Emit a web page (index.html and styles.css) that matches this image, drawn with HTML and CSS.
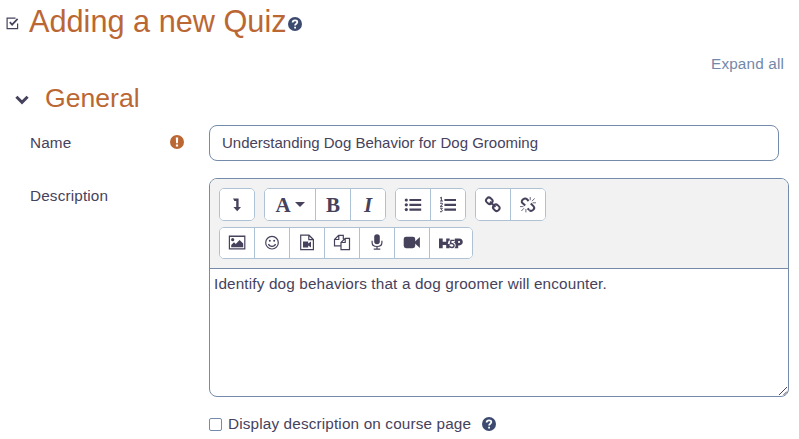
FILE: index.html
```html
<!DOCTYPE html>
<html lang="en">
<head>
<meta charset="utf-8">
<title>Adding a new Quiz</title>
<link rel="stylesheet" href="styles.css">
</head>
<body>
<svg class="defs" width="0" height="0">
  <symbol id="help" viewBox="0 0 14 14"><circle cx="7" cy="7" r="7"/><path d="M4.6 5.5C4.7 2.6 9.6 2.7 9.3 5.3 9.2 6.7 7.1 6.7 7.1 8.5M7.1 9.7V11.4" fill="none" stroke="#fff" stroke-width="1.8"/></symbol>
</svg>
<header class="page-title">
  <svg class="quiz-icon" viewBox="0 0 13 13"><path d="M9.5 1.1H1.1V11.6H11.6V6.5" fill="none" stroke="currentColor" stroke-width="1.2"/><path d="M3.8 5.2 6.1 7.7 11.6 1.8" fill="none" stroke="currentColor" stroke-width="1.7"/></svg>
  <h1>Adding a new Quiz</h1>
  <svg class="help"><use href="#help"/></svg>
</header>
<div class="expand"><a>Expand all</a></div>
<div class="section">
  <svg class="chevron" viewBox="0 0 14 10"><path d="M1.4 1.7 7 7.3 12.6 1.7" fill="none" stroke="currentColor" stroke-width="3"/></svg>
  <h2>General</h2>
</div>
<div class="row name-row">
  <div class="label"><label for="name">Name</label>
    <svg class="required" viewBox="0 0 14 14"><circle cx="7" cy="7" r="7"/><path d="M5.8 2.5H8.2L7.9 8.2H6.1ZM5.9 9.4H8.1V11.5H5.9Z" fill="#fff"/></svg>
  </div>
  <input id="name" type="text" value="Understanding Dog Behavior for Dog Grooming">
</div>
<div class="row desc-row">
  <div class="label"><label>Description</label></div>
  <div class="editor">
    <div class="toolbar">
      <div class="tools">
        <div class="group"><button><svg viewBox="0 0 18 18"><path d="M5 2.5H10.6V11H13L9.2 15.2 5.4 11H8.2V4.9H6.4Z"/></svg></button></div>
        <div class="group"><button class="styles"><b>A</b><span class="caret"></span></button><button><b>B</b></button><button><i>I</i></button></div>
        <div class="group">
          <button><svg viewBox="0 0 18 18"><circle cx="2.3" cy="4" r="1.6"/><circle cx="2.3" cy="8.8" r="1.6"/><circle cx="2.3" cy="13.6" r="1.6"/><path d="M5.4 2.9H17.2V5.1H5.4ZM5.4 7.7H17.2V9.9H5.4ZM5.4 12.5H17.2V14.7H5.4Z"/></svg></button>
          <button><svg viewBox="0 0 18 18"><path d="M5.4 2.9H17V5.1H5.4ZM5.4 7.7H17V9.9H5.4ZM5.4 12.5H17V14.7H5.4Z"/><path d="M1 2.2 2.4 1.2V5M1 5H4M1 7.2H3.3V8.6L1.2 10.4H3.7M1 12.2H3.4L2.2 13.7C4.2 13.7 3.7 16.4 1 15.7" fill="none" stroke="currentColor"/></svg></button>
        </div>
        <div class="group">
          <button><svg class="line" viewBox="0 0 18 18" stroke-width="2"><rect x="2" y="2" width="6.6" height="5.6" rx="2.6" transform="rotate(43 5.3 4.8)"/><rect x="9" y="8.9" width="6.6" height="5.6" rx="2.6" transform="rotate(43 12.3 11.7)"/><path d="M6 5.6 11.4 11"/></svg></button>
          <button><svg class="line" viewBox="0 0 18 18" stroke-width="2"><path d="M8 3.3C5.8 1.3 1.3 4.4 3.2 6.8L6.2 9.6M10.4 14.2C12.8 16.2 16.6 12.6 14.6 10.4L11.8 7.5M8 3.3 9.6 5M10.2 14 8.6 12.4"/><path d="M11.2 4.2V1M13 5.2 15.6 2.4M13.6 6.8H17M1 10.6H4.4M2.4 15 5 12.2M6.9 13V16.4" stroke-width=".8"/></svg></button>
        </div>
      </div>
      <div class="tools second">
        <div class="group">
          <button><svg viewBox="0 0 18 18"><path fill-rule="evenodd" d="M.8 1.5H17.4V15.5H.8ZM2 3.1V14.3H16.2V3.1Z"/><circle cx="4.7" cy="5.7" r="1.6"/><path d="M3.2 13.3V11L6 8.3 7.7 9.9 11.6 6 15.2 9.6V13.3Z"/></svg></button>
          <button><svg viewBox="0 0 18 18"><circle cx="9" cy="8.7" r="6.3" fill="none" stroke="currentColor" stroke-width="1.2"/><circle cx="6.8" cy="6.7" r="1"/><circle cx="11.2" cy="6.7" r="1"/><path d="M5.5 10C6.4 13.1 11.6 13.1 12.5 10" fill="none" stroke="currentColor" stroke-width="1.2"/></svg></button>
          <button><svg viewBox="0 0 18 18"><path d="M2.7 1.2H11L15.4 5.5V15.7H2.7ZM10.8 1.3V5.7H15.2" fill="none" stroke="currentColor" stroke-width="1.2"/><path d="M5 7.5H10.2V9.5L13 7.5V13.5L10.2 11.5V13.5H5Z"/></svg></button>
          <button><svg class="line" viewBox="0 0 18 18" stroke-width="1.2"><path d="M8 11.8H1.5V5.5L5.6 1.3H10.3V5.2M5.8 1.3V5.5H1.6M12.2 4.3H16.5V15.7H8V8.5ZM12.2 4.3V8.5H8"/></svg></button>
          <button><svg viewBox="0 0 18 18"><rect x="6.2" y=".3" width="5.6" height="10" rx="2.8"/><path d="M4.1 6.8V8.5C4.1 13.8 13.9 13.8 13.9 8.5V6.8M9 12.3V15M5.7 15.1H12.3" fill="none" stroke="currentColor" stroke-width="1.2"/></svg></button>
          <button><svg viewBox="0 0 18 18"><rect x=".7" y="2.7" width="11.5" height="11.5" rx="2.4"/><path d="M11.7 7.7 16.9 3V13.9L11.7 9.3Z"/></svg></button>
          <button class="h5p"><svg viewBox="0 0 26 16"><path d="M1 3.5H4.7V6.8H8.2V3.5H11.7V5.8H10.6L9.8 9H11.6V13.3H8.2V9.9H4.7V13.3H1ZM16.8 3.5H21.2C26 3.5 26 10.4 21.2 10.4H20.2V13.3H16.6C18.5 11.2 17.8 8 15.4 7.1H16.8ZM20.2 6.1V8H21.3C22.5 8 22.5 6.1 21.3 6.1Z" fill-rule="evenodd"/><path d="M16.6 5.4H13L12.4 8.7C16.6 7.5 17.4 12.6 13.8 12.5 12.3 12.5 11.7 11.7 11.4 11" fill="none" stroke="currentColor" stroke-width="1.4"/></svg></button>
        </div>
      </div>
    </div>
    <div class="content">Identify dog behaviors that a dog groomer will encounter.</div>
    <svg class="resize" viewBox="0 0 10 10"><path d="M1 9 9 1M5.5 9 9 5.5" fill="none" stroke="currentColor"/></svg>
  </div>
</div>
<div class="display-row"><input id="show" type="checkbox"><label for="show">Display description on course page</label><svg class="help"><use href="#help"/></svg></div>
</body>
</html>
```
FILE: styles.css
```css
* { box-sizing: border-box; }
body {
  margin: 0;
  height: 439px;
  overflow: hidden;
  background: #fff;
  color: #46425c;
  font: 15.3px/20px "Liberation Sans", Arial, sans-serif;
  letter-spacing: .15px;
}
svg { display: block; fill: currentColor; flex: none; }
.line { fill: none; stroke: currentColor; }
.defs { position: absolute; }
h1, h2 { margin: 0; color: #bb6733; font-weight: 400; letter-spacing: 0; }
.page-title { display: flex; align-items: center; height: 44px; padding-left: 6px; }
.quiz-icon { width: 13px; height: 13px; margin: 3px 10px 0 0; }
h1 { font-size: 30.7px; line-height: 44px; }
.help { width: 14px; height: 14px; color: #3c4a70; }
.page-title .help { margin: 3px 0 0 1px; }
.expand { display: flex; justify-content: flex-end; padding: 10px 15px 0 0; color: #7388a9; }
.section { display: flex; align-items: center; height: 32px; margin-top: 8px; padding-left: 15px; }
.chevron { width: 14px; height: 10px; margin: 3px 16px 0 0; }
h2 { font-size: 26.6px; line-height: 32px; }
.row { display: flex; padding-left: 30px; }
.name-row { margin-top: 11px; }
.desc-row { margin-top: 17px; }
.label { display: flex; justify-content: space-between; align-items: flex-start; width: 179px; padding: 8px 25px 0 0; flex: none; }
.required { width: 14px; height: 14px; margin-top: 2px; color: #bb6733; }
input[type="text"] {
  width: 570px; height: 36px; padding: 0 12px 1px; border: 1px solid #748baa; border-radius: 8px;
  background: #fff; color: inherit; font: inherit; font-size: 15px; letter-spacing: 0; outline: 0;
}
.editor { position: relative; width: 580px; height: 219px; border: 1px solid #748baa; border-radius: 8px; overflow: hidden; }
.toolbar { height: 90px; padding: 9px 9px 0; background: #f2f2f2; border-bottom: 1px solid #748baa; }
.tools { display: flex; gap: 9px; height: 33px; }
.second { height: 32px; margin-top: 6px; }
.group { display: flex; border: 1px solid #adc3d5; border-radius: 5px; background: #fff; overflow: hidden; }
button {
  display: flex; align-items: center; justify-content: center; width: 35px; padding: 0;
  border: 0; background: #fff; color: inherit; font: 21px/28px "Liberation Serif", serif; letter-spacing: 0;
}
button + button { border-left: 1px solid #adc3d5; }
.group button:first-child { width: 34px; }
button svg { width: 18px; height: 18px; }
.group .styles:first-child { width: 50px; gap: 4px; }
.caret { border: 5px solid transparent; border-top-color: currentColor; border-bottom: 0; }
i { font-weight: 700; }
.group .h5p { width: 43px; }
.h5p svg { width: 26px; height: 16px; }
.content { padding: 5px 4px; }
.resize { position: absolute; right: 0; bottom: 0; width: 10px; height: 10px; }
.display-row { display: flex; align-items: center; margin-top: 17px; padding-left: 209px; }
input[type="checkbox"] { appearance: none; width: 13px; height: 13px; margin: 0 6px 0 0; border: 1px solid #748baa; border-radius: 2px; }
.display-row .help { margin-left: 11px; }
```
